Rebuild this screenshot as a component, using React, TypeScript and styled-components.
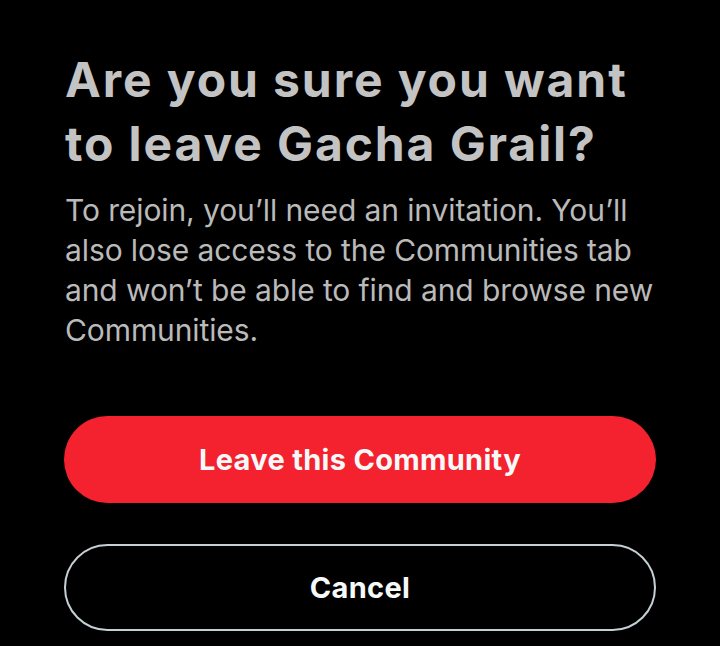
import * as React from "react";
import styled, { createGlobalStyle } from "styled-components";

const GlobalStyle = createGlobalStyle`
  html, body {
    margin: 0;
    padding: 0;
    background: #000;
  }
  body {
    font-family: Inter, "Noto Sans", sans-serif;
  }
`;

const Sheet = styled.div`
  box-sizing: border-box;
  width: 720px;
  height: 646px;
  padding: 48px 64px 0 65px;
  background: #000;
  display: flex;
  flex-direction: column;
  overflow: hidden;
`;

const Title = styled.h1`
  margin: 0;
  max-width: 585px;
  font-size: 48px;
  line-height: 64px;
  font-weight: 700;
  color: #c3c3c3;
  letter-spacing: 1.9px;
`;

const Message = styled.p`
  margin: 14px 0 0;
  font-size: 30px;
  line-height: 40px;
  font-weight: 400;
  color: #bababa;
  letter-spacing: -0.1px;
`;

const Actions = styled.div`
  display: flex;
  flex-direction: column;
  gap: 41px;
  margin: 66px 0 0 -1px;
`;

const PillButton = styled.button<{ $variant: "danger" | "outline" }>`
  box-sizing: border-box;
  width: 592px;
  height: 87px;
  border-radius: 44px;
  font-family: Inter, "Noto Sans", sans-serif;
  font-size: 29px;
  font-weight: 700;
  color: #f7f9f9;
  cursor: pointer;
  letter-spacing: 0.3px;
  background: ${(p) => (p.$variant === "danger" ? "#f4212e" : "#000")};
  border: ${(p) => (p.$variant === "danger" ? "none" : "2px solid #c5d0d5")};
`;

export default function App() {
  return (
    <>
      <GlobalStyle />
      <Sheet>
        <Title>Are you sure you want to leave Gacha Grail?</Title>
        <Message>
          To rejoin, you’ll need an invitation. You’ll also lose access to the
          Communities tab and won’t be able to find and browse new Communities.
        </Message>
        <Actions>
          <PillButton $variant="danger">Leave this Community</PillButton>
          <PillButton $variant="outline">Cancel</PillButton>
        </Actions>
      </Sheet>
    </>
  );
}
